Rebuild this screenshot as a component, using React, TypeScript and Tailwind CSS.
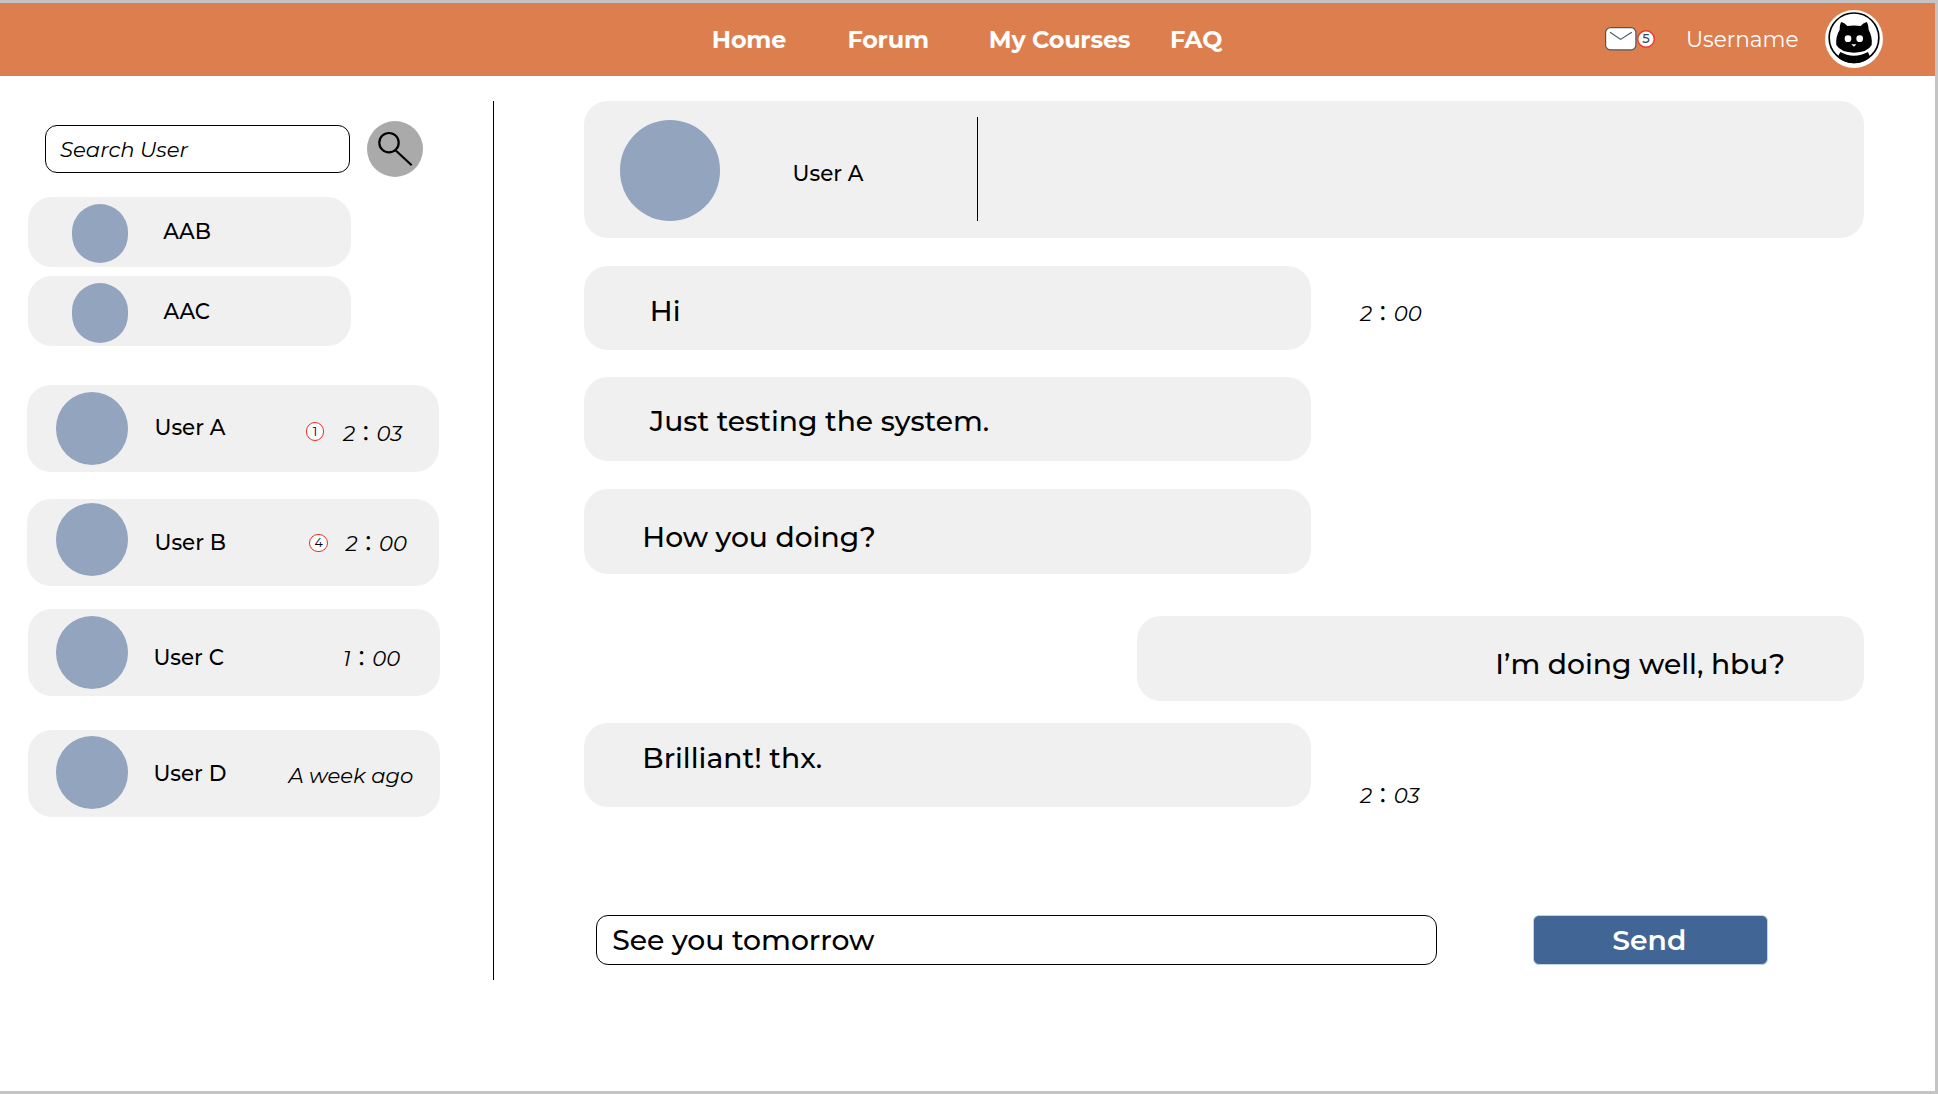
import React from "react";

const navLinks = [
  { label: "Home", box: "w-[135.6px]" },
  { label: "Forum", box: "w-[141.4px]" },
  { label: "My Courses", box: "w-[181.2px]" },
  { label: "FAQ", box: "w-[60px]" },
];

const results = [
  { name: "AAB", pos: "ml-[35px] mt-[19.5px]" },
  { name: "AAC", pos: "ml-[35.3px] mt-[19.5px]" },
];

type Conversation = {
  name: string;
  time: string;
  unread?: string;
  card: string;
  avatar: string;
  label: string;
  badge?: string;
  stamp: string;
};

const conversations: Conversation[] = [
  {
    name: "User A",
    time: "2:03",
    unread: "1",
    card: "mt-[38.5px] ml-[27px]",
    avatar: "ml-[28.7px] mt-[7px]",
    label: "ml-[26.3px] mt-[27px]",
    badge: "ml-[51.4px] mt-[37.5px]",
    stamp: "ml-[18.5px] mt-[33px]",
  },
  {
    name: "User B",
    time: "2:00",
    unread: "4",
    card: "mt-[27px] ml-[27px]",
    avatar: "ml-[28.7px] mt-[4.8px]",
    label: "ml-[26.3px] mt-[28px]",
    badge: "ml-[54.9px] mt-[35px]",
    stamp: "ml-[17.5px] mt-[29px]",
  },
  {
    name: "User C",
    time: "1:00",
    card: "mt-[23px] ml-[28px]",
    avatar: "ml-[27.7px] mt-[7px]",
    label: "ml-[25.2px] mt-[33px]",
    stamp: "ml-[89.6px] mt-[34px]",
  },
  {
    name: "User D",
    time: "A week ago",
    card: "mt-[34px] ml-[28px]",
    avatar: "ml-[27.7px] mt-[6px]",
    label: "ml-[25.2px] mt-[28px]",
    stamp: "ml-[35px] mt-[30px]",
  },
];

type Message = { text: string; time?: string; row: string; bubble: string; stamp?: string };

const messages: Message[] = [
  { text: "Hi", time: "2:00", row: "mt-[28.2px]", bubble: "pl-[65.8px] pt-[25.5px]", stamp: "ml-[49px] mt-[32px]" },
  { text: "Just testing the system.", row: "mt-[26.8px]", bubble: "pl-[65.8px] pt-[24px]" },
  { text: "How you doing?", row: "mt-[27.6px]", bubble: "pl-[58.3px] pt-[28.3px]" },
  { text: "I’m doing well, hbu?", row: "mt-[42.5px] justify-end", bubble: "pl-[358.3px] pt-[28px]" },
  { text: "Brilliant! thx.", time: "2:03", row: "mt-[22px]", bubble: "pl-[58.3px] pt-[15.5px]", stamp: "ml-[49px] mt-[57px]" },
];

function Stamp({ value, className }: { value: string; className: string }) {
  const [head, tail] = value.split(":");
  return (
    <span className={`shrink-0 whitespace-nowrap text-[21.2px] leading-[30px] italic ${className}`}>
      {head}
      {tail && (
        <span className="font-['Noto_Sans_CJK_JP',sans-serif] text-[21.6px] leading-none font-normal not-italic">：</span>
      )}
      {tail}
    </span>
  );
}

function CatAvatar() {
  return (
    <svg viewBox="0 0 204 204" className="h-[68px] w-[68px] shrink-0">
      <circle cx="102" cy="102" r="87" fill="#fff" />
      <ellipse cx="102" cy="98" rx="74.5" ry="74" fill="none" stroke="#000" strokeWidth="5" />
      <path
        d="M64 51Q59 57 59 74Q46 96 49 120Q62 142 102 143Q143 142 155 120Q158 96 146 74Q145 57 140 51Q129 54 122 63Q102 60 82 63Q75 54 64 51Z"
        fill="#000"
      />
      <path d="M61 141Q80 152 102 152Q124 152 144 141L150 155Q130 175 102 175Q74 175 53 156Z" fill="#000" />
      <circle cx="84" cy="101" r="10" fill="#fff" />
      <circle cx="119" cy="101" r="10" fill="#fff" />
      <path d="M94 118H109L102 125Z" fill="#fff" />
    </svg>
  );
}

export default function App() {
  return (
    <div className="flex h-[1094px] w-[1938px] flex-col overflow-hidden border-t-[3px] border-r-[3px] border-b-[3px] border-[#c4c4c4] bg-white font-['Montserrat','Inter',sans-serif] text-black">
      <header className="flex h-[72.5px] shrink-0 items-start bg-[#dd7e4e] text-white">
        <nav className="flex w-[1605px] pt-[22px] pl-[711.8px] text-[23.9px] leading-[30px] font-bold tracking-[-0.2px] whitespace-nowrap">
          {navLinks.map((l) => (
            <a key={l.label} className={l.box}>
              {l.label}
            </a>
          ))}
        </nav>
        <svg viewBox="0 0 32 24" className="mt-[24px] h-6 w-8 shrink-0">
          <rect x="0.6" y="0.6" width="30.3" height="22.3" rx="5" fill="#fff" stroke="#455a64" strokeWidth="1.2" />
          <path d="M5 5.2L15.6 12.4L26.8 5.2" fill="none" stroke="#455a64" strokeWidth="1.2" />
        </svg>
        <svg viewBox="0 0 18 18" className="mt-[27px] h-[18px] w-[18px] shrink-0">
          <circle cx="9" cy="9" r="8.3" fill="#fff" stroke="#f0362c" strokeWidth="1.4" />
          <text x="9" y="13.4" textAnchor="middle" fontSize="13" fontWeight="500" fill="#37474f">
            5
          </text>
        </svg>
        <span className="mt-[21px] ml-[31px] w-[133.9px] text-[21.6px] leading-[30px]">Username</span>
        <div className="mt-[2px]">
          <CatAvatar />
        </div>
      </header>

      <main className="flex grow">
        <aside className="flex w-[493px] shrink-0 flex-col pt-[45.5px]">
          <div className="flex h-[56px] shrink-0 items-center pl-[45px]">
            <div className="flex h-[48.5px] w-[304.5px] items-center rounded-[12px] border border-black pb-px pl-[14px] text-[21.2px] leading-[30px] italic">
              Search User
            </div>
            <button className="ml-[17px] h-14 w-14 rounded-full bg-[#aaaaaa]">
              <svg viewBox="0 0 56 56" className="h-14 w-14" fill="none" stroke="#000" strokeWidth="2.2">
                <circle cx="22" cy="21.7" r="9.7" />
                <path d="M28.2 29L44.7 44.2" />
              </svg>
            </button>
          </div>

          <div className="mt-[19.5px] ml-7 flex flex-col gap-[9.7px]">
            {results.map((r) => (
              <div key={r.name} className="flex h-[70px] w-[323px] items-start rounded-[24px] bg-[#f0f0f0]">
                <span className="mt-[7px] ml-[43.5px] h-[59.5px] w-[56.7px] shrink-0 rounded-full bg-[#93a4be]" />
                <span className={`text-[21.4px] leading-[30px] font-medium ${r.pos}`}>{r.name}</span>
              </div>
            ))}
          </div>

          {conversations.map((c) => (
            <div
              key={c.name}
              className={`flex h-[87px] w-[412px] shrink-0 items-start rounded-[24px] bg-[#f0f0f0] ${c.card}`}
            >
              <span className={`h-[73px] w-[72.5px] shrink-0 rounded-full bg-[#93a4be] ${c.avatar}`} />
              <span
                className={`w-[100px] shrink-0 whitespace-nowrap text-[21.4px] leading-[30px] font-medium ${c.label}`}
              >
                {c.name}
              </span>
              {c.unread && (
                <span
                  className={`flex h-[18.5px] w-[18.5px] shrink-0 items-center justify-center rounded-full border border-[#ee2c24] bg-white pt-px text-[12.5px] leading-none ${c.badge}`}
                >
                  {c.unread}
                </span>
              )}
              <Stamp value={c.time} className={c.stamp} />
            </div>
          ))}
        </aside>

        <div className="mt-[25.5px] h-[879px] w-px shrink-0 bg-black" />

        <section className="flex w-[1370px] shrink-0 flex-col pt-[25.5px] pl-[90px]">
          <div className="flex h-[136.5px] shrink-0 items-start rounded-[24px] bg-[#f0f0f0]">
            <span className="mt-[19px] ml-[36.4px] h-[101px] w-[99.5px] shrink-0 rounded-full bg-[#93a4be]" />
            <span className="mt-[57px] ml-[72.7px] w-[184px] text-[21.4px] leading-[30px] font-medium">User A</span>
            <span className="mt-[15.5px] h-[104.5px] w-px bg-black" />
          </div>

          {messages.map((m) => (
            <div key={m.text} className={`flex h-[84.5px] shrink-0 items-start ${m.row}`}>
              <div
                className={`h-[84.5px] w-[727px] shrink-0 rounded-[24px] bg-[#f0f0f0] text-[28.2px] leading-[40px] font-medium whitespace-nowrap ${m.bubble}`}
              >
                {m.text}
              </div>
              {m.time && <Stamp value={m.time} className={m.stamp ?? ""} />}
            </div>
          ))}

          <div className="mt-[108.2px] ml-[12.3px] flex shrink-0 items-start">
            <div className="flex h-[49.5px] w-[840.5px] items-center rounded-[12px] border border-black pl-[14.9px] text-[28.25px] leading-[40px] font-medium">
              See you tomorrow
            </div>
            <button className="ml-[96px] flex h-[49.5px] w-[235px] items-center justify-center rounded-[6px] border border-[#c3d2e2] bg-[#416594] pr-[2px] text-[28.2px] leading-[40px] font-semibold text-white">
              Send
            </button>
          </div>
        </section>
      </main>
    </div>
  );
}
